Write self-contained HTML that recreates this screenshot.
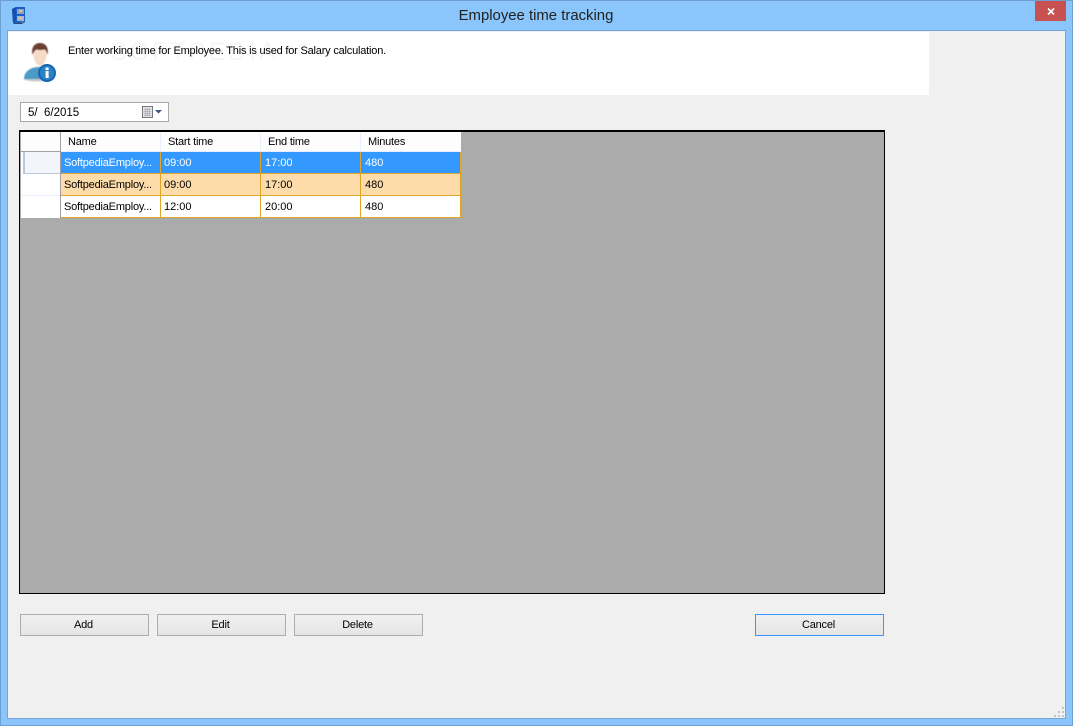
<!DOCTYPE html>
<html><head><meta charset="utf-8"><title>Employee time tracking</title>
<style>
html,body{margin:0;padding:0}
body{width:1073px;height:726px;overflow:hidden;position:relative;background:#8AC5FB;font-family:"Liberation Sans",sans-serif;font-size:11px;letter-spacing:-.2px;color:#000}
div{position:absolute;box-sizing:border-box;white-space:nowrap}
.btn{height:22px;width:129px;top:614px;border:1px solid #adadad;background:linear-gradient(#f0f0f0,#e5e5e5);text-align:center;line-height:21px;padding-right:2px}
.c{height:22px;line-height:23px;padding-left:3px;border-right:1px solid #e0a526;border-bottom:1px solid #e0a526}
.n{letter-spacing:0}
.p{padding-left:4px}
.h{top:132px;height:19px;line-height:21px;background:#fdfdfd;padding-left:7px;border-right:1px solid #e6effb}
</style></head><body>
<div style="left:0;top:0;width:1073px;height:726px;border:1px solid #6f9fd0"></div>
<div style="left:7px;top:30px;width:1059px;height:689px;background:#f0f0f0;border:1px solid #74a5d8"></div>
<svg style="position:absolute;left:11px;top:6px" width="16" height="18" viewBox="0 0 16 18"><path d="M1 3 5 1h9v13l-4 3H2z" fill="#1c5fc4"/><path d="M1 3 5 1v13l-3 3z" fill="#1450ad"/><rect x="6" y="3" width="7" height="5" fill="#8fa3bb"/><rect x="6" y="10" width="7" height="5" fill="#a9b5c4"/><rect x="8" y="4" width="3" height="2" fill="#e8c090"/><rect x="8" y="11" width="3" height="2" fill="#e8c090"/><path d="M2 17h9l3-3v2l-3 2H3z" fill="#334a70"/></svg>
<div style="left:300px;width:472px;top:7px;text-align:center;font-size:14.9px;letter-spacing:0;line-height:18px;color:#222">Employee time tracking</div>
<div style="left:1035px;top:1px;width:31px;height:20px;background:#c75050"></div>
<svg style="position:absolute;left:1047px;top:8px" width="8" height="7" viewBox="0 0 8 7"><path d="M1 .5 7 6.500M7 .5 1 6.500" stroke="#fff" stroke-width="1.700"/></svg>
<div style="left:8px;top:32px;width:921px;height:63px;background:#fff"></div>
<div style="left:110px;top:38px;font-size:25px;letter-spacing:3px;line-height:28px;color:#f6f6f6">SOFTPEDIA</div>
<svg style="position:absolute;left:22px;top:41px" width="36" height="42" viewBox="0 0 36 42"><g style="filter:blur(.4px)"><ellipse cx="15" cy="38" rx="13" ry="2.500" fill="#c9c9c9"/><path d="M2 38C2 31 8 26 17 26s12 4 12 12z" fill="#4d9ac8"/><path d="M11 9c0 9 3 16 7 16s7-7 7-16z" fill="#f6dcc6"/><path d="M10.500 14C9 7 12 2 18 2s9 5 7.500 12c-.5-3-1.500-5-3-5.500-3 .5-6 .5-8 0-2 1-3.500 3-4 5.500z" fill="#6a4130"/></g><circle cx="25" cy="32" r="9" fill="#1668b0"/><circle cx="25" cy="32" r="7" fill="#2b83c6"/><rect x="23.600" y="30" width="3" height="7" fill="#fff"/><rect x="23.600" y="26.500" width="3" height="2.500" fill="#fff"/></svg>
<div style="left:68px;top:44px;line-height:14px">Enter working time for Employee. This is used for Salary calculation.</div>

<div style="left:20px;top:102px;width:149px;height:20px;background:#fff;border:1px solid #a9a9a9;line-height:20px;padding-left:7px;white-space:pre;font-size:11.500px;letter-spacing:0">5/  6/2015</div>
<svg style="position:absolute;left:142px;top:105px" width="24" height="14" viewBox="0 0 24 14"><rect x="0.500" y="1.500" width="10" height="11" fill="#e6e6e6" stroke="#77777f"/><path d="M2 4.500h7M2 6.500h7M2 8.500h7M2 10.500h7M3.500 3v8M5.500 3v8M7.500 3v8" stroke="#a8adb5" stroke-width=".7"/><path d="M13 5h7l-3.500 3.500z" fill="#3c5680"/></svg>

<div style="left:19px;top:130px;width:866px;height:464px;background:#ababab;border:1px solid #000;border-top-width:2px"></div>
<div style="left:21px;top:132px;width:440px;height:86px;background:#fff"></div>
<div class="h" style="left:21px;width:40px;border-right:1px solid #a0a0a0;border-bottom:1px solid #a0a0a0;height:20px"></div>
<div class="h" style="left:61px;width:100px">Name</div>
<div class="h" style="left:161px;width:100px">Start time</div>
<div class="h" style="left:261px;width:100px">End time</div>
<div class="h" style="left:361px;width:100px;border-right:0">Minutes</div>
<div style="left:61px;top:151px;width:400px;height:1px;background:#e6effb"></div>

<div style="left:21px;top:152px;width:40px;height:66px;background:#fff;border-right:1px solid #a0a0a0"></div>
<div style="left:23px;top:152px;width:37px;height:22px;background:#f2f5fa;border:1px solid #b9c7dc;border-width:0 0 1px 2px"></div>
<div style="left:21px;top:195px;width:39px;height:1px;background:#e6effb"></div>

<div class="c" style="left:61px;top:152px;width:100px;background:#3399ff;color:#fff">SoftpediaEmploy...</div>
<div class="c n" style="left:161px;top:152px;width:100px;background:#3399ff;color:#fff">09:00</div>
<div class="c n p" style="left:261px;top:152px;width:100px;background:#3399ff;color:#fff">17:00</div>
<div class="c n p" style="left:361px;top:152px;width:100px;background:#3399ff;color:#fff">480</div>

<div class="c" style="left:61px;top:174px;width:100px;background:#fddcaa">SoftpediaEmploy...</div>
<div class="c n" style="left:161px;top:174px;width:100px;background:#fddcaa">09:00</div>
<div class="c n p" style="left:261px;top:174px;width:100px;background:#fddcaa">17:00</div>
<div class="c n p" style="left:361px;top:174px;width:100px;background:#fddcaa">480</div>

<div class="c" style="left:61px;top:196px;width:100px;background:#fff">SoftpediaEmploy...</div>
<div class="c n" style="left:161px;top:196px;width:100px;background:#fff">12:00</div>
<div class="c n p" style="left:261px;top:196px;width:100px;background:#fff">20:00</div>
<div class="c n p" style="left:361px;top:196px;width:100px;background:#fff">480</div>

<div class="btn" style="left:20px">Add</div>
<div class="btn" style="left:157px">Edit</div>
<div class="btn" style="left:294px">Delete</div>
<div class="btn" style="left:755px;border-color:#3399ff">Cancel</div>

<svg style="position:absolute;left:1054px;top:707px" width="11" height="11" viewBox="0 0 11 11" fill="#c4c4c4"><rect x="8" y="0" width="2" height="2"/><rect x="4" y="4" width="2" height="2"/><rect x="8" y="4" width="2" height="2"/><rect x="0" y="8" width="2" height="2"/><rect x="4" y="8" width="2" height="2"/><rect x="8" y="8" width="2" height="2"/></svg>
</body></html>
